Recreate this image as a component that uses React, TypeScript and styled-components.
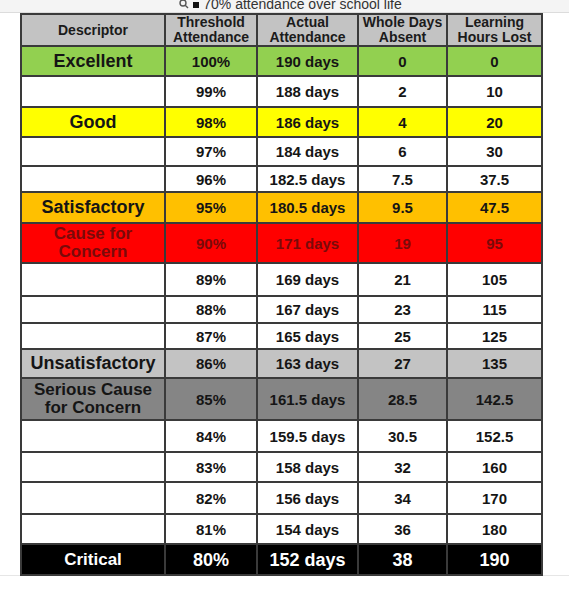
import styled, { createGlobalStyle } from "styled-components";

const GlobalStyle = createGlobalStyle`
  body {
    margin: 0;
    background: #ffffff;
    font-family: "Liberation Sans", Arial, sans-serif;
  }
`;

const Page = styled.div`
  width: 569px;
  height: 600px;
  display: flex;
  flex-direction: column;
  background: #ffffff;
`;

const SearchBar = styled.div`
  height: 12px;
  overflow: hidden;
  background: #f4f4f4;
  border-bottom: 1px solid #dcdcdc;
  display: flex;
  justify-content: center;
  align-items: flex-end;
  gap: 4px;
  padding-left: 12px;
`;

const SearchText = styled.span`
  font-size: 14px;
  line-height: 14px;
  margin-bottom: 1px;
  color: #333;
`;

const Square = styled.span`
  width: 6px;
  height: 6px;
  background: #111;
  margin-bottom: 4px;
`;

const Lens = styled.svg`
  width: 10px;
  height: 10px;
  margin-bottom: 3px;
`;

const Main = styled.div`
  flex: 1;
  padding-left: 20px;
  border-bottom: 1px solid #e6e6e6;
  max-height: 562px;
`;

const Table = styled.table`
  border-collapse: collapse;
  width: 521px;
  table-layout: fixed;
  border: 2px solid #3a3a3a;
`;

const Col = styled.col<{ $w: number }>`
  width: ${(p) => p.$w}px;
`;

const HeadCell = styled.th`
  background: #c3c3c3;
  border: 2px solid #3a3a3a;
  font-size: 14px;
  line-height: 15px;
  font-weight: bold;
  color: #1b1b1b;
  padding: 0;
  height: 30px;
  white-space: pre-line;
`;

const Row = styled.tr<{ $bg: string; $fg: string; $h: number }>`
  background: ${(p) => p.$bg};
  color: ${(p) => p.$fg};
  height: ${(p) => p.$h}px;
`;

const Cell = styled.td<{ $big?: boolean }>`
  border: 2px solid #3a3a3a;
  text-align: center;
  padding: 0;
  font-weight: bold;
  font-size: ${(p) => (p.$big ? "18px" : "15px")};
  line-height: ${(p) => (p.$big ? "20px" : "17px")};
`;

const Label = styled.td<{ $size: number }>`
  border: 2px solid #3a3a3a;
  text-align: center;
  padding: 0;
  font-weight: bold;
  white-space: pre-line;
  font-size: ${(p) => p.$size}px;
  line-height: ${(p) => p.$size + 1}px;
`;

type RowData = {
  label?: string;
  cells: string[];
  bg: string;
  fg: string;
  h: number;
  size?: number;
  big?: boolean;
};

const widths = [144, 92, 101, 89, 95];

const heads = [
  "Descriptor",
  "Threshold\nAttendance",
  "Actual\nAttendance",
  "Whole Days\nAbsent",
  "Learning\nHours Lost",
];

const rows: RowData[] = [
  { label: "Excellent", cells: ["100%", "190 days", "0", "0"], bg: "#92d050", fg: "#151515", h: 30, size: 18 },
  { cells: ["99%", "188 days", "2", "10"], bg: "#ffffff", fg: "#151515", h: 31 },
  { label: "Good", cells: ["98%", "186 days", "4", "20"], bg: "#ffff00", fg: "#151515", h: 30, size: 18 },
  { cells: ["97%", "184 days", "6", "30"], bg: "#ffffff", fg: "#151515", h: 29 },
  { cells: ["96%", "182.5 days", "7.5", "37.5"], bg: "#ffffff", fg: "#151515", h: 26 },
  { label: "Satisfactory", cells: ["95%", "180.5 days", "9.5", "47.5"], bg: "#ffc000", fg: "#151515", h: 31, size: 18 },
  { label: "Cause for\nConcern", cells: ["90%", "171 days", "19", "95"], bg: "#ff0000", fg: "#7a0a0a", h: 40, size: 17 },
  { cells: ["89%", "169 days", "21", "105"], bg: "#ffffff", fg: "#151515", h: 33 },
  { cells: ["88%", "167 days", "23", "115"], bg: "#ffffff", fg: "#151515", h: 27 },
  { cells: ["87%", "165 days", "25", "125"], bg: "#ffffff", fg: "#151515", h: 26 },
  { label: "Unsatisfactory", cells: ["86%", "163 days", "27", "135"], bg: "#c3c3c3", fg: "#151515", h: 29, size: 18 },
  { label: "Serious Cause\nfor Concern", cells: ["85%", "161.5 days", "28.5", "142.5"], bg: "#858585", fg: "#151515", h: 42, size: 17 },
  { cells: ["84%", "159.5 days", "30.5", "152.5"], bg: "#ffffff", fg: "#151515", h: 32 },
  { cells: ["83%", "158 days", "32", "160"], bg: "#ffffff", fg: "#151515", h: 30 },
  { cells: ["82%", "156 days", "34", "170"], bg: "#ffffff", fg: "#151515", h: 32 },
  { cells: ["81%", "154 days", "36", "180"], bg: "#ffffff", fg: "#151515", h: 30 },
  { label: "Critical", cells: ["80%", "152 days", "38", "190"], bg: "#000000", fg: "#ffffff", h: 31, size: 17, big: true },
];

function SearchIcon() {
  return (
    <Lens viewBox="0 0 10 10">
      <circle cx="4" cy="4" r="3" fill="none" stroke="#555" strokeWidth="1.4" />
      <line x1="6.2" y1="6.2" x2="9" y2="9" stroke="#555" strokeWidth="1.4" />
    </Lens>
  );
}

export default function App() {
  return (
    <>
      <GlobalStyle />
      <Page>
        <SearchBar>
          <SearchIcon />
          <Square />
          <SearchText>70% attendance over school life</SearchText>
        </SearchBar>
        <Main>
          <Table>
            <colgroup>
              {widths.map((w, i) => (
                <Col key={i} $w={w} />
              ))}
            </colgroup>
            <thead>
              <tr>
                {heads.map((h) => (
                  <HeadCell key={h}>{h}</HeadCell>
                ))}
              </tr>
            </thead>
            <tbody>
              {rows.map((r, i) => (
                <Row key={i} $bg={r.bg} $fg={r.fg} $h={r.h}>
                  <Label $size={r.size || 15}>{r.label || ""}</Label>
                  {r.cells.map((c, j) => (
                    <Cell key={j} $big={r.big}>
                      {c}
                    </Cell>
                  ))}
                </Row>
              ))}
            </tbody>
          </Table>
        </Main>
      </Page>
    </>
  );
}
